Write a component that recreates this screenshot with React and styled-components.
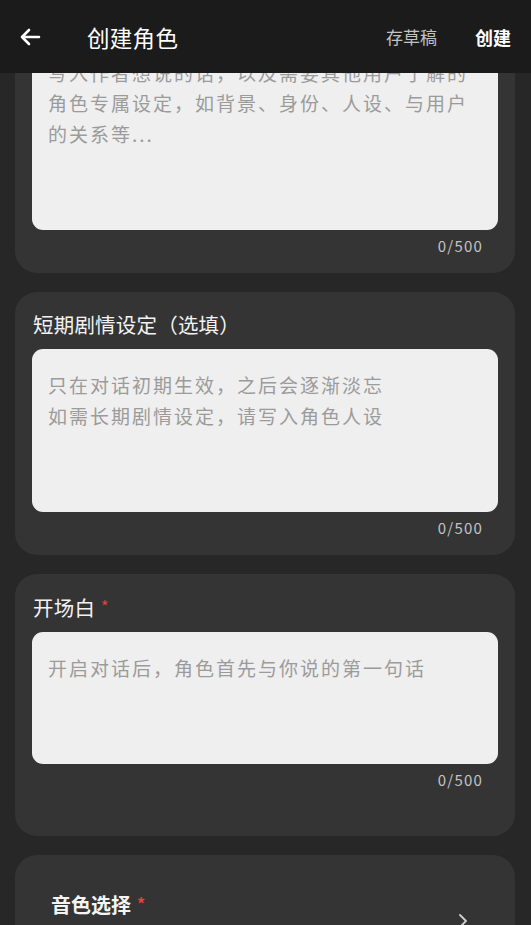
import React, { useLayoutEffect, useRef } from 'react';
import styled, { createGlobalStyle } from 'styled-components';

const GlobalStyle = createGlobalStyle`
  html, body {
    margin: 0;
    padding: 0;
    background: #272727;
  }
  body {
    font-family: "Noto Sans CJK SC", "Noto Sans", sans-serif;
  }
`;

const fields = [
  {
    title: '角色设定',
    required: true,
    lines: [
      '可以写入角色的性格、外貌、说话方式，以及',
      '写入作者想说的话，以及需要其他用户了解的',
      '角色专属设定，如背景、身份、人设、与用户',
      '的关系等...',
    ],
    height: 224,
    bottom: 17,
  },
  {
    title: '短期剧情设定（选填）',
    lines: ['只在对话初期生效，之后会逐渐淡忘', '如需长期剧情设定，请写入角色人设'],
    height: 163,
    bottom: 17,
  },
  {
    title: '开场白',
    required: true,
    lines: ['开启对话后，角色首先与你说的第一句话'],
    height: 132,
    bottom: 46,
  },
];

export default function App() {
  const scroller = useRef(null);

  useLayoutEffect(() => {
    if (scroller.current) scroller.current.scrollTop = 145;
  }, []);

  return (
    <Page>
      <GlobalStyle />
      <Header>
        <Back>
          <svg width="22" height="18" viewBox="0 0 22 18" fill="none">
            <path d="M20 9H3M10 2L3 9l7 7" stroke="#fff" strokeWidth="2.6" strokeLinecap="round" strokeLinejoin="round" />
          </svg>
        </Back>
        <HeaderTitle>创建角色</HeaderTitle>
        <Draft>存草稿</Draft>
        <Create>创建</Create>
      </Header>

      <Scroller ref={scroller}>
        {fields.map(f => (
          <Card key={f.title} bottom={f.bottom}>
            <Label>
              {f.title}
              {f.required && <Star>*</Star>}
            </Label>
            <Field height={f.height}>
              {f.lines.map(l => (
                <Line key={l}>{l}</Line>
              ))}
            </Field>
            <Counter>0/500</Counter>
          </Card>
        ))}

        <Card bottom={38} wide>
          <SelectRow>
            <div>
              <SelectTitle>
                音色选择<Star>*</Star>
              </SelectTitle>
              <SelectHint>请选择角色音色</SelectHint>
            </div>
            <Chevron width="12" height="16" viewBox="0 0 12 16" fill="none">
              <path d="M3 2l6 6-6 6" stroke="#cfcfcf" strokeWidth="1.8" strokeLinecap="round" strokeLinejoin="round" />
            </Chevron>
          </SelectRow>
        </Card>
        <Card bottom={40}>
          <Label>角色头像</Label>
        </Card>
      </Scroller>
    </Page>
  );
}

const Page = styled.div`
  position: relative;
  height: 100vh;
  overflow: hidden;
  background: #272727;
`;

const Header = styled.header`
  position: absolute;
  top: 0;
  left: 0;
  right: 0;
  z-index: 2;
  height: 73px;
  display: flex;
  align-items: center;
  padding: 0 20px 0 19px;
  box-sizing: border-box;
  background: #1b1b1b;
`;

const Back = styled.div`
  display: flex;
  align-items: center;
  width: 22px;
  margin-top: 1px;
`;

const HeaderTitle = styled.h1`
  flex: 1;
  margin: 0 0 0 46px;
  font-size: 22.5px;
  font-weight: 400;
  color: #fff;
  letter-spacing: 0.3px;
`;

const Draft = styled.span`
  font-size: 17px;
  color: #c2c2c2;
  margin-right: 38px;
`;

const Create = styled.span`
  font-size: 18px;
  font-weight: 700;
  color: #fff;
`;

const Scroller = styled.main`
  height: 100vh;
  overflow-y: auto;
  box-sizing: border-box;
  padding: 93px 16px 40px 15px;
  display: flex;
  flex-direction: column;
  gap: 19px;
  scrollbar-width: none;
  &::-webkit-scrollbar {
    display: none;
  }
`;

const Card = styled.section`
  flex-shrink: 0;
  background: #343434;
  border-radius: 22px;
  padding: ${p => (p.wide ? `36px 46px ${p.bottom}px 36px` : `20px 17px ${p.bottom}px 17px`)};
  display: flex;
  flex-direction: column;
`;

const Label = styled.div`
  font-size: 20.5px;
  line-height: 24px;
  color: #f2f2f2;
  padding-left: 1px;
  letter-spacing: 0.2px;
`;

const Star = styled.span`
  color: #e0453a;
  font-size: 16px;
  margin-left: 6px;
  vertical-align: 3px;
`;

const Field = styled.div`
  margin-top: 13px;
  height: ${p => p.height}px;
  box-sizing: border-box;
  padding: 21px 16px;
  background: #efefef;
  border-radius: 11px;
`;

const Line = styled.div`
  font-size: 19px;
  line-height: 30.5px;
  letter-spacing: 2px;
  color: #9b9b9b;
  white-space: nowrap;
`;

const Counter = styled.div`
  margin-top: 6px;
  padding-right: 15px;
  text-align: right;
  font-size: 15px;
  line-height: 20px;
  letter-spacing: 1.2px;
  color: #c4c4c4;
`;

const SelectRow = styled.div`
  display: flex;
  align-items: center;
  justify-content: space-between;
`;

const Chevron = styled.svg`
  margin-top: 6px;
`;

const SelectTitle = styled.div`
  font-size: 20px;
  line-height: 24px;
  font-weight: 700;
  color: #f4f4f4;
`;

const SelectHint = styled.div`
  margin-top: 6px;
  font-size: 15px;
  line-height: 22px;
  color: #9a9a9a;
`;
